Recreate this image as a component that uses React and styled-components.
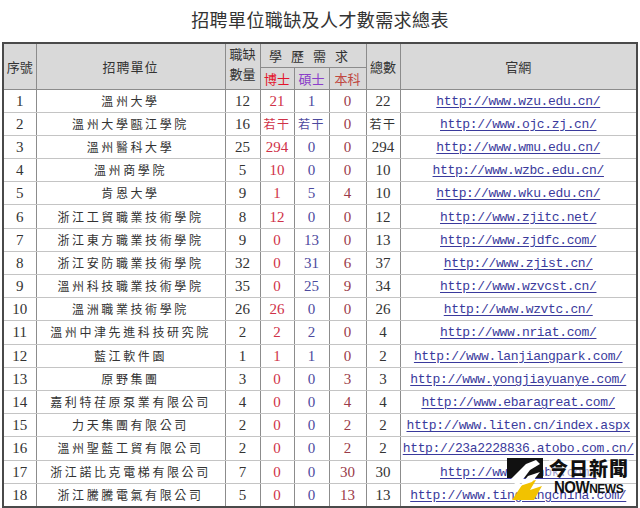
import React from 'react';
import styled, { createGlobalStyle } from 'styled-components';

const GlobalStyle = createGlobalStyle`
  html, body {
    margin: 0;
    padding: 0;
    background: #ffffff;
  }
  body {
    width: 640px;
    height: 508px;
    overflow: hidden;
    font-family: "Noto Sans CJK TC", "Liberation Serif", serif;
  }
`;

const rows = [
  [1, '溫州大學', 12, '21', '1', '0', '22', 'http://www.wzu.edu.cn/'],
  [2, '溫州大學甌江學院', 16, '若干', '若干', '0', '若干', 'http://www.ojc.zj.cn/'],
  [3, '溫州醫科大學', 25, '294', '0', '0', '294', 'http://www.wmu.edu.cn/'],
  [4, '溫州商學院', 5, '10', '0', '0', '10', 'http://www.wzbc.edu.cn/'],
  [5, '肯恩大學', 9, '1', '5', '4', '10', 'http://www.wku.edu.cn/'],
  [6, '浙江工貿職業技術學院', 8, '12', '0', '0', '12', 'http://www.zjitc.net/'],
  [7, '浙江東方職業技術學院', 9, '0', '13', '0', '13', 'http://www.zjdfc.com/'],
  [8, '浙江安防職業技術學院', 32, '0', '31', '6', '37', 'http://www.zjist.cn/'],
  [9, '溫州科技職業技術學院', 35, '0', '25', '9', '34', 'http://www.wzvcst.cn/'],
  [10, '溫洲職業技術學院', 26, '26', '0', '0', '26', 'http://www.wzvtc.cn/'],
  [11, '溫州中津先進科技研究院', 2, '2', '2', '0', '4', 'http://www.nriat.com/'],
  [12, '藍江軟件園', 1, '1', '1', '0', '2', 'http://www.lanjiangpark.com/'],
  [13, '原野集團', 3, '0', '0', '3', '3', 'http://www.yongjiayuanye.com/'],
  [14, '嘉利特荏原泵業有限公司', 4, '0', '0', '4', '4', 'http://www.ebaragreat.com/'],
  [15, '力天集團有限公司', 2, '0', '0', '2', '2', 'http://www.liten.cn/index.aspx'],
  [16, '溫州聖藍工貿有限公司', 2, '0', '0', '2', '2', 'http://23a2228836.atobo.com.cn/'],
  [17, '浙江諾比克電梯有限公司', 7, '0', '0', '30', '30', 'http://www.zjnbk.com/'],
  [18, '浙江騰騰電氣有限公司', 5, '0', '0', '13', '13', 'http://www.tingiangchina.com/'],
];

const Page = styled.div`
  position: relative;
  width: 640px;
  height: 508px;
  display: flex;
  flex-direction: column;
  align-items: center;
`;

const Title = styled.h1`
  margin: 7px 0 0;
  height: 35px;
  font-family: "Noto Sans CJK TC", serif;
  font-weight: 400;
  font-size: 18px;
  letter-spacing: 0.4px;
  color: #333;
  line-height: 24px;
`;

const Table = styled.table`
  width: 636px;
  border-collapse: collapse;
  table-layout: fixed;
  border: 2px solid #4a4a4a;
`;

const HeadCell = styled.th`
  background: #d9d9d9;
  border: 1px solid #8c8c8c;
  font-weight: 400;
  font-size: 13px;
  padding: 0;
  letter-spacing: ${p => p.$spread || '0'};
  color: ${p => p.$color || '#333'};
  line-height: 15px;
`;

const HeadRow = styled.tr`
  height: ${p => p.$h}px;
`;

const BodyRow = styled.tr`
  height: 23.2px;
`;

const Cell = styled.td`
  border-left: 1px solid #8c8c8c;
  border-right: 1px solid #8c8c8c;
  border-bottom: 1px solid #c4c4c4;
  padding: 0;
  text-align: center;
  white-space: nowrap;
  overflow: hidden;
  font-family: "Liberation Serif", "Noto Sans CJK TC", serif;
  font-size: 15px;
  line-height: 20px;
  color: ${p => p.$color || '#333'};
`;

const NameCell = styled(Cell)`
  font-family: "Noto Sans CJK TC", serif;
  font-size: 12px;
  letter-spacing: 2.6px;
  color: #333;
`;

const CjkNum = styled.span`
  font-family: "Noto Sans CJK TC", serif;
  font-size: 12px;
  letter-spacing: 1.5px;
`;

const Link = styled.a`
  font-family: "Liberation Mono", monospace;
  font-size: 13px;
  letter-spacing: -0.35px;
  color: #3a3a9c;
  text-decoration: underline;
  text-underline-offset: 2px;
`;

const Logo = styled.div`
  position: absolute;
  left: 506px;
  top: 456px;
  display: flex;
  align-items: flex-start;
  gap: 3px;
`;

const LogoWords = styled.div`
  display: flex;
  flex-direction: column;
  align-items: flex-start;
  padding-top: 1px;
`;

const LogoCn = styled.div`
  font-family: "Noto Sans CJK TC", sans-serif;
  font-weight: 900;
  font-size: 19px;
  line-height: 21px;
  letter-spacing: 1px;
  color: #111;
  background: rgba(255, 255, 255, 0.55);
`;

const LogoEn = styled.div`
  margin-left: 5px;
  margin-top: 3px;
  font-family: "Liberation Sans", sans-serif;
  font-weight: 700;
  font-size: 15px;
  line-height: 14px;
  color: #111;
  letter-spacing: -0.5px;
  transform: scaleY(1.1);
  small {
    font-size: 12px;
  }
`;

const renderVal = v => (/\d/.test(v) ? v : <CjkNum>{v}</CjkNum>);

const Mark = () => (
  <svg width="40" height="46" viewBox="0 0 40 46">
    <rect x="1" y="2" width="36" height="20" fill="#111" />
    <path d="M4 24 L20 8 L30 4 L34 8 L24 14 L12 30 Z" fill="#fff" />
    <path d="M6 44 L18 26 L30 24 L24 34 L36 30 L28 44 Z" fill="#f2c200" />
    <path d="M14 30 L22 20 L34 16 L26 26 Z" fill="#fff" />
  </svg>
);

export default function App() {
  return (
    <>
      <GlobalStyle />
      <Page>
        <Title>招聘單位職缺及人才數需求總表</Title>
        <Table>
          <colgroup>
            <col style={{ width: 33 }} />
            <col style={{ width: 189 }} />
            <col style={{ width: 35 }} />
            <col style={{ width: 34 }} />
            <col style={{ width: 35 }} />
            <col style={{ width: 37 }} />
            <col style={{ width: 34 }} />
            <col />
          </colgroup>
          <thead>
            <HeadRow $h={24}>
              <HeadCell rowSpan={2}>序號</HeadCell>
              <HeadCell rowSpan={2} $spread="1px">招聘單位</HeadCell>
              <HeadCell rowSpan={2}>職缺<br /><span style={{ lineHeight: '26px' }}>數量</span></HeadCell>
              <HeadCell colSpan={3} $spread="9px">學歷需求</HeadCell>
              <HeadCell rowSpan={2}>總數</HeadCell>
              <HeadCell rowSpan={2}>官網</HeadCell>
            </HeadRow>
            <HeadRow $h={22}>
              <HeadCell $color="#e3142c">博士</HeadCell>
              <HeadCell $color="#8b3fc9">碩士</HeadCell>
              <HeadCell $color="#c0483f">本科</HeadCell>
            </HeadRow>
          </thead>
          <tbody>
            {rows.map(r => (
              <BodyRow key={r[0]}>
                <Cell>{r[0]}</Cell>
                <NameCell>{r[1]}</NameCell>
                <Cell>{r[2]}</Cell>
                <Cell $color="#cf3148">{renderVal(r[3])}</Cell>
                <Cell $color="#4d4a9e">{renderVal(r[4])}</Cell>
                <Cell $color="#9a3a48">{r[5]}</Cell>
                <Cell>{renderVal(r[6])}</Cell>
                <Cell><Link href={r[7]}>{r[7]}</Link></Cell>
              </BodyRow>
            ))}
          </tbody>
        </Table>
        <Logo>
          <Mark />
          <LogoWords>
            <LogoCn>今日新聞</LogoCn>
            <LogoEn>NOW<small>NEWS</small></LogoEn>
          </LogoWords>
        </Logo>
      </Page>
    </>
  );
}
